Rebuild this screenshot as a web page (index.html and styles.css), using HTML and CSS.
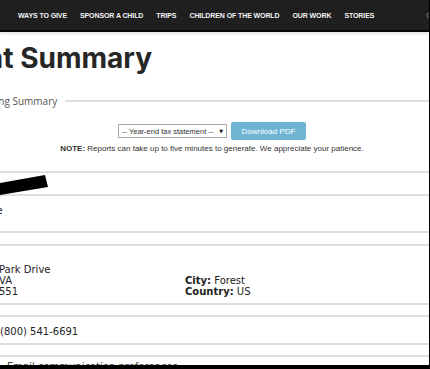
FILE: index.html
```html
<!DOCTYPE html>
<html lang="en">
<head>
    <meta charset="UTF-8">
    <meta name="viewport" content="width=device-width, initial-scale=1.0">
    <title>Statement Summary</title>
    <link rel="stylesheet" href="styles.css">
</head>
<body>
    <div class="screen">
        <header class="top-nav">
            <nav class="nav-links">
                <a href="#">Ways to Give</a>
                <a href="#">Sponsor a Child</a>
                <a href="#">Trips</a>
                <a href="#">Children of the World</a>
                <a href="#">Our Work</a>
                <a href="#">Stories</a>
            </nav>
            <a href="#" class="nav-contact">Contact</a>
        </header>

        <main class="statement">
            <h1 class="page-title">Statement Summary</h1>

            <div class="summary-legend">
                <span class="legend-text">Giving Summary</span>
                <span class="legend-line"></span>
            </div>

            <form class="report-tools">
                <span class="select-wrap">
                    <select class="report-select">
                        <option>-- Year-end tax statement --</option>
                    </select>
                </span>
                <button type="button" class="btn btn-download">Download PDF</button>
            </form>
            <p class="report-note"><strong>NOTE:</strong> Reports can take up to five minutes to generate. We appreciate your patience.</p>

            <section class="info-group">
                <div class="info-row info-row--id">
                    <!-- marker drawn over the account number -->
                    <svg class="redaction" width="50" height="24" viewBox="0 0 50 24">
                        <polygon points="0,10 45,2 48,14 0,22" fill="#000"/>
                    </svg>
                </div>
                <div class="info-row info-row--name">
                    <span class="sponsor-name">Jane Doe</span>
                </div>
            </section>

            <section class="info-group">
                <div class="info-row info-row--address">
                    <div class="address-lines">
                        <div>Park Drive</div>
                        <div>VA</div>
                        <div>551</div>
                    </div>
                    <div class="address-meta">
                        <div><strong>City:</strong> Forest</div>
                        <div><strong>Country:</strong> US</div>
                    </div>
                </div>
            </section>

            <section class="info-group">
                <div class="info-row info-row--phone">(800) 541-6691</div>
            </section>

            <section class="info-group">
                <div class="info-row info-row--more">Email communication preferences</div>
            </section>
        </main>
    </div>
</body>
</html>
```

FILE: styles.css
```css
:root {
    --nav-bg: #1f1f1f;
    --rule: #dedede;
    --text: #222;
    --button: #6fb4d3;
}

html, body {
    margin: 0;
    padding: 0;
    background: #fff;
}

body {
    font-family: "DejaVu Sans", sans-serif;
    color: var(--text);
}

.screen {
    width: 430px;
    height: 369px;
    box-sizing: border-box;
    border-right: 1px solid #000;
    border-bottom: 4px solid #000;
    overflow: hidden;
    background: #fff;
}

/* top navigation */
.top-nav {
    display: flex;
    align-items: center;
    height: 30px;
    background: var(--nav-bg);
    border-bottom: 2px solid #060606;
    box-shadow: 0 2px 3px rgba(0, 0, 0, 0.12);
    white-space: nowrap;
    overflow: hidden;
}

.nav-links {
    display: flex;
    gap: 13px;
    padding-left: 18px;
    flex-shrink: 0;
}

.nav-links a {
    color: #f3f3f3;
    font: bold 7px "Liberation Sans", sans-serif;
    text-transform: uppercase;
    text-decoration: none;
    letter-spacing: -0.1px;
}

.nav-contact {
    margin-left: 52px;
    color: #9c9c9c;
    font: 7px "Liberation Sans", sans-serif;
    text-transform: uppercase;
    text-decoration: none;
    flex-shrink: 0;
}

/* page content */
.page-title {
    margin: 12px 0 0 -128px;
    font: 700 28px/28px "Inter", sans-serif;
    color: #262626;
    white-space: nowrap;
}

.summary-legend {
    display: flex;
    align-items: center;
    gap: 8px;
    margin-top: 22px;
    height: 14px;
}

.legend-text {
    margin-left: -19px;
    font: 10px "Open Sans", sans-serif;
    color: #555;
    white-space: nowrap;
}

.legend-line {
    flex: 1;
    height: 2px;
    background: var(--rule);
}

.report-tools {
    display: flex;
    justify-content: center;
    align-items: center;
    gap: 4px;
    width: 424px;
    margin: 14px 0 0;
}

.select-wrap {
    position: relative;
    display: flex;
}

.select-wrap::after {
    content: "\25BC";
    position: absolute;
    right: 4px;
    top: 50%;
    transform: translateY(-50%);
    font-size: 5px;
    line-height: 1;
    color: #111;
    pointer-events: none;
}

.report-select {
    appearance: none;
    -webkit-appearance: none;
    width: 109px;
    height: 14px;
    padding: 0 0 0 3px;
    border: 1px solid #a8a8a8;
    border-radius: 0;
    background: #fff;
    font: 7.5px "Liberation Sans", sans-serif;
    color: #333;
}

.btn {
    border: none;
    cursor: pointer;
}

.btn-download {
    width: 75px;
    height: 18px;
    padding: 0;
    border-radius: 2px;
    background: var(--button);
    color: #fff;
    font: 8px "Liberation Sans", sans-serif;
}

.report-note {
    width: 424px;
    margin: 4px 0 0;
    text-align: center;
    font: 8px/10px "Liberation Sans", sans-serif;
    color: #333;
}

.info-group {
    border-top: 2px solid var(--rule);
    border-bottom: 2px solid var(--rule);
    margin-bottom: 10px;
}

.statement .info-group:first-of-type {
    margin-top: 17px;
    margin-bottom: 11px;
}

.info-row {
    font-size: 10px;
    line-height: 12px;
    white-space: nowrap;
}

.info-row + .info-row {
    border-top: 2px solid var(--rule);
}

.info-row--id {
    position: relative;
    height: 21px;
}

.redaction {
    position: absolute;
    left: 0;
    top: 0;
    overflow: visible;
}

.info-row--name {
    padding: 9px 0 14px;
}

.sponsor-name {
    margin-left: -42px;
}

.info-row--address {
    display: grid;
    grid-template-columns: 185px 1fr;
    padding: 18px 0 6px;
    line-height: 11px;
}

.address-lines {
    margin-left: -1px;
}

.address-meta {
    align-self: end;
}

.info-row--phone {
    padding: 9px 0 5px;
}

.info-row--more {
    padding: 4px 0 0 7px;
    color: #444;
}
```
